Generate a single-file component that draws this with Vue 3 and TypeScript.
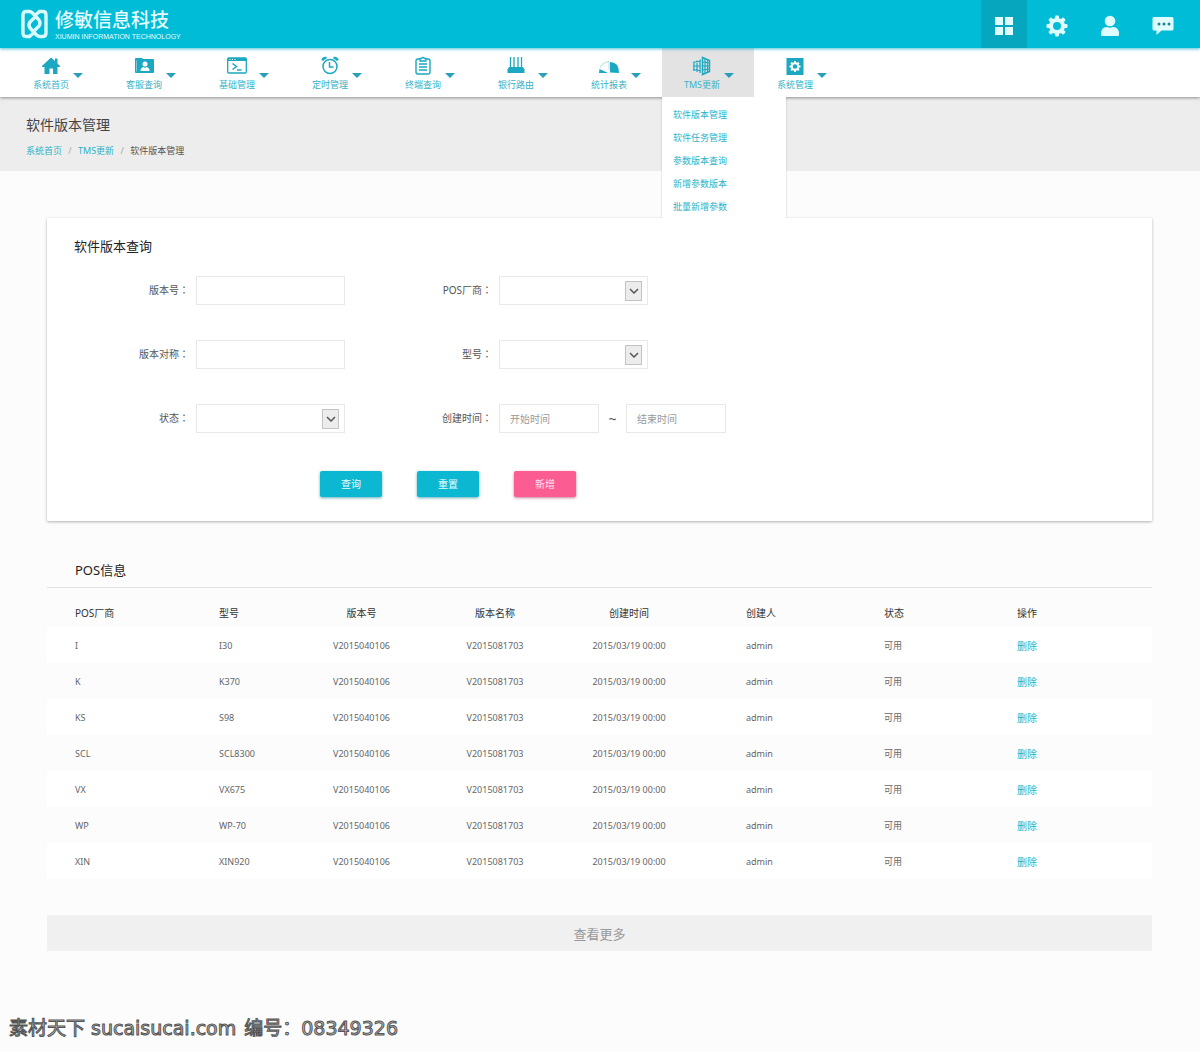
<script setup lang="ts">
import { ref } from 'vue'

interface NavItem {
  label: string
  icon: string
  children?: string[]
}

interface PosRow {
  vendor: string
  model: string
}

const navItems: NavItem[] = [
  { label: '系统首页', icon: 'home' },
  { label: '客服查询', icon: 'service' },
  { label: '基础管理', icon: 'terminal' },
  { label: '定时管理', icon: 'clock' },
  { label: '终端查询', icon: 'clipboard' },
  { label: '银行路由', icon: 'router' },
  { label: '统计报表', icon: 'chart' },
  {
    label: 'TMS更新',
    icon: 'building',
    children: ['软件版本管理', '软件任务管理', '参数版本查询', '新增参数版本', '批量新增参数'],
  },
  { label: '系统管理', icon: 'settings' },
]

const activeNav = ref('TMS更新')

const rows: PosRow[] = [
  { vendor: 'I', model: 'I30' },
  { vendor: 'K', model: 'K370' },
  { vendor: 'KS', model: 'S98' },
  { vendor: 'SCL', model: 'SCL8300' },
  { vendor: 'VX', model: 'VX675' },
  { vendor: 'WP', model: 'WP-70' },
  { vendor: 'XIN', model: 'XIN920' },
]

const teeth = [0, 45, 90, 135, 180, 225, 270, 315]
</script>

<template>
  <div class="page">
    <header class="topbar">
      <a class="brand" href="#">
        <svg class="brand-mark" viewBox="0 0 27 30" aria-hidden="true">
          <g fill="none" stroke="#d9fbff" stroke-width="3.4" stroke-linejoin="round" stroke-linecap="round">
            <path d="M8.500 27.500 H5 Q2 27.500 2 24 V6 Q2 2.500 5 2.500 H8 Q10 2.500 11.500 4 L18 11 Q20 14 18 17 L14 21" />
            <path d="M18.500 2.500 H22 Q25 2.500 25 6 V24 Q25 27.500 22 27.500 H19 Q17 27.500 15.500 26 L9 19 Q7 16 9 13 L13 9" />
            <path d="M8.500 27.500 L12 24.500 M18.500 2.500 L15 5.500" />
          </g>
        </svg>
        <span class="brand-text">
          <span class="brand-name">修敏信息科技</span>
          <span class="brand-sub">XIUMIN INFORMATION TECHNOLOGY</span>
        </span>
      </a>
      <div class="tools">
        <button class="tool current" type="button" aria-label="应用">
          <svg viewBox="0 0 22 22"><path d="M2 2h8v8H2zM12 2h8v8h-8zM2 12h8v8H2zM12 12h8v8h-8z" /></svg>
        </button>
        <button class="tool" type="button" aria-label="设置">
          <svg viewBox="0 0 22 22">
            <circle cx="11" cy="11" r="6" fill="none" stroke="currentColor" stroke-width="4" />
            <rect v-for="a in teeth" :key="a" x="9" y="0.500" width="4" height="4" rx="1" :transform="`rotate(${a} 11 11)`" />
          </svg>
        </button>
        <button class="tool" type="button" aria-label="用户">
          <svg viewBox="0 0 22 22">
            <circle cx="11" cy="6" r="5.300" />
            <path d="M2 20 Q1.500 12 8 12 Q11 13.500 14 12 Q20.500 12 20 20 Q20 21 19 21 H3 Q2 21 2 20z" />
          </svg>
        </button>
        <button class="tool" type="button" aria-label="消息">
          <svg viewBox="0 0 22 22">
            <path d="M2 2h18q1.500 0 1.500 1.500v10.500q0 1.500-1.500 1.500H9.500L4.500 20v-4.500H2Q.5 15.500.5 14V3.500Q.5 2 2 2z" />
            <g fill="#25809a"><circle cx="7" cy="9" r="1.500" /><circle cx="12" cy="9" r="1.500" /><circle cx="17" cy="9" r="1.500" /></g>
          </svg>
        </button>
      </div>
    </header>

    <nav class="nav">
      <div v-for="item in navItems" :key="item.label" class="nav-item" :class="{ active: item.label === activeNav }">
        <a class="nav-link" href="#" @click.prevent="activeNav = item.label">
          <span class="nav-main">
            <svg v-if="item.icon === 'home'" class="nav-icon" viewBox="0 0 20 20">
              <path fill="currentColor" d="M10 1.500 L14 5 V2.500 h2.500 V7.500 L19 10 V11 H16.500 V18 H12 V12.500 H8.500 V18 H3.500 V11 H1 V10z" />
            </svg>
            <svg v-else-if="item.icon === 'service'" class="nav-icon" viewBox="0 0 20 20">
              <path fill="currentColor" d="M2 2h6l1 1h10q1 0 1 1v12q0 1-1 1H2q-1 0-1-1V3q0-1 1-1z" />
              <path fill="#fff" d="M3 4.500h-.6v11h.6z" opacity=".7" />
              <circle cx="11" cy="8" r="2.500" fill="#fff" />
              <path fill="#fff" d="M6.500 15q0-3.500 3-4l1.500 1 1.500-1q3 .5 3 4z" />
            </svg>
            <svg v-else-if="item.icon === 'terminal'" class="nav-icon" viewBox="0 0 20 20" fill="none" stroke="currentColor">
              <rect x="0.700" y="2" width="18.600" height="15" rx="1" stroke-width="1.300" />
              <path d="M1 3.500h18" stroke-width="3" />
              <path d="M2.500 3.500h1M5 3.500h1M7.500 3.500h1" stroke="#fff" />
              <path d="M5.500 7.500 L9.500 10.500 L5.500 13.500" stroke-width="1.500" />
              <path d="M10 14h4.500" stroke-width="1.500" />
            </svg>
            <svg v-else-if="item.icon === 'clock'" class="nav-icon" viewBox="0 0 20 20" fill="none" stroke="currentColor">
              <circle cx="10" cy="10.500" r="7" stroke-width="1.500" />
              <path d="M9.500 6v5h4" stroke-width="1.500" />
              <path d="M2.500 4.500 Q3 1.500 6.500 2 M17.500 4.500 Q17 1.500 13.500 2" stroke-width="2.500" />
            </svg>
            <svg v-else-if="item.icon === 'clipboard'" class="nav-icon" viewBox="0 0 20 20" fill="none" stroke="currentColor">
              <rect x="3" y="3" width="14" height="15" rx="2" stroke-width="1.400" />
              <path d="M7 2.500 h1.500 Q10 .5 11.500 2.500 H13 V5 H7z" fill="#fff" stroke-width="1.300" />
              <path d="M6 8h8M6 11h8M6 14h8" stroke-width="1.300" />
            </svg>
            <svg v-else-if="item.icon === 'router'" class="nav-icon" viewBox="0 0 20 20">
              <path d="M4.500 1v11M8 1v11M12 1v11M15.500 1v11" stroke="currentColor" stroke-width="1.300" />
              <path fill="currentColor" d="M3 11h14l1.500 2.500v3.500h-17v-3.500z" />
            </svg>
            <svg v-else-if="item.icon === 'chart'" class="nav-icon" viewBox="0 0 20 20">
              <path fill="currentColor" d="M11 6 Q20 6 20 17 L11 16.500z" />
              <path d="M1 12 Q3 6.500 10 5.500 L10 14" fill="none" stroke="currentColor" stroke-width=".6" opacity=".6" />
              <path fill="currentColor" d="M.5 13 L9 17 H0z" />
            </svg>
            <svg v-else-if="item.icon === 'building'" class="nav-icon" viewBox="0 0 20 20" fill="none" stroke="currentColor">
              <path d="M10.500 1.500 L17.500 4.500 V15.500 L10.500 18.500z" stroke-width="1.500" />
              <path d="M13 2.500v15M15.500 3.500v13M10.500 6l7 1M10.500 10h7M10.500 14l7-1" stroke-width="1.200" />
              <path d="M2 5.500v9.500M5 4.500v11.500M8 3.500v13.500M1 6.500l8-1.500M1 10h8M1 13.500l8 1.500" stroke-width="1.200" />
            </svg>
            <svg v-else class="nav-icon" viewBox="0 0 20 20">
              <rect x="1.500" y="2" width="17" height="17" fill="currentColor" />
              <circle cx="10" cy="10.500" r="3.300" fill="none" stroke="#fff" stroke-width="2" />
              <rect v-for="a in teeth" :key="a" x="9" y="5" width="2" height="2" fill="#fff" :transform="`rotate(${a} 10 10.500)`" />
            </svg>
            <span class="nav-label">{{ item.label }}</span>
          </span>
          <span class="caret" />
        </a>
        <ul v-if="item.children && item.label === activeNav" class="submenu">
          <li v-for="child in item.children" :key="child"><a href="#">{{ child }}</a></li>
        </ul>
      </div>
    </nav>

    <section class="title-band">
      <h1>软件版本管理</h1>
      <div class="crumbs">
        <a href="#">系统首页</a><span class="slash">/</span><a href="#">TMS更新</a><span class="slash">/</span><span>软件版本管理</span>
      </div>
    </section>

    <main class="content">
      <form class="panel" @submit.prevent>
        <h2>软件版本查询</h2>
        <div class="fields">
          <label for="version">版本号<span class="colon">：</span></label>
          <input id="version" class="box" type="text" />
          <label for="vendor">POS厂商<span class="colon">：</span></label>
          <span class="select">
            <select id="vendor" class="box"><option value=""></option></select>
            <span class="select-btn"><svg viewBox="0 0 10 6"><path d="M1 1 L5 5 L9 1" /></svg></span>
          </span>
          <label for="alias">版本对称<span class="colon">：</span></label>
          <input id="alias" class="box" type="text" />
          <label for="model">型号<span class="colon">：</span></label>
          <span class="select">
            <select id="model" class="box"><option value=""></option></select>
            <span class="select-btn"><svg viewBox="0 0 10 6"><path d="M1 1 L5 5 L9 1" /></svg></span>
          </span>
          <label for="state">状态<span class="colon">：</span></label>
          <span class="select">
            <select id="state" class="box"><option value=""></option></select>
            <span class="select-btn"><svg viewBox="0 0 10 6"><path d="M1 1 L5 5 L9 1" /></svg></span>
          </span>
          <label for="from">创建时间<span class="colon">：</span></label>
          <span class="range">
            <input id="from" class="box" type="text" placeholder="开始时间" />
            <span class="tilde">~</span>
            <input class="box" type="text" placeholder="结束时间" aria-label="结束时间" />
          </span>
        </div>
        <div class="actions">
          <button type="submit">查询</button>
          <button type="reset">重置</button>
          <button type="button" class="add">新增</button>
        </div>
      </form>

      <section class="list">
        <h2>POS信息</h2>
        <table>
          <colgroup>
            <col class="c-vendor" /><col class="c-model" /><col class="c-version" /><col class="c-name" />
            <col class="c-time" /><col class="c-user" /><col class="c-state" /><col />
          </colgroup>
          <thead>
            <tr>
              <th>POS厂商</th>
              <th>型号</th>
              <th class="mid">版本号</th>
              <th class="mid">版本名称</th>
              <th class="mid">创建时间</th>
              <th>创建人</th>
              <th>状态</th>
              <th>操作</th>
            </tr>
          </thead>
          <tbody>
            <tr v-for="row in rows" :key="row.vendor">
              <td>{{ row.vendor }}</td>
              <td>{{ row.model }}</td>
              <td class="mid">V2015040106</td>
              <td class="mid">V2015081703</td>
              <td class="mid">2015/03/19 00:00</td>
              <td>admin</td>
              <td>可用</td>
              <td><a href="#">删除</a></td>
            </tr>
          </tbody>
        </table>
      </section>

      <button class="more" type="button">查看更多</button>
    </main>

    <footer class="credit">
      <span>素材天下</span><span>sucaisucai.com</span><span class="code">编号：08349326</span>
    </footer>
  </div>
</template>

<style>
body {
  margin: 0;
  background: #fcfcfc;
}
</style>

<style scoped>
.page {
  min-height: 100vh;
  background: #fcfcfc;
  color: #555;
  font-family: "Noto Sans", "Noto Sans CJK SC", sans-serif;
  font-size: 10px;
}

.page * {
  box-sizing: border-box;
}

a {
  color: #2bb3c8;
  text-decoration: none;
}

button,
input,
select {
  font: inherit;
}

h1,
h2 {
  margin: 0;
  font-weight: 400;
}

.topbar {
  position: relative;
  z-index: 3;
  display: flex;
  justify-content: space-between;
  height: 48px;
  padding: 0 14px 0 21px;
  background: #00bcd7;
  box-shadow: 0 1px 3px rgba(0, 170, 195, 0.7);
}

.brand {
  display: flex;
  align-items: center;
  gap: 7px;
  color: #e6fdff;
}

.brand-mark {
  width: 27px;
  height: 30px;
}

.brand-text {
  display: flex;
  flex-direction: column;
  gap: 1px;
  padding-top: 2px;
}

.brand-name {
  font-size: 19px;
  font-weight: 500;
  line-height: 22px;
}

.brand-sub {
  font-family: "Liberation Sans", Arial, sans-serif;
  font-size: 7px;
  line-height: 10px;
}

.tools {
  display: flex;
  gap: 7px;
}

.tool {
  display: flex;
  align-items: center;
  justify-content: center;
  width: 46px;
  padding: 3px 0 0;
  border: 0;
  background: none;
  color: #dffcff;
}

.tool.current {
  background: #06a6be;
}

.tool svg {
  width: 22px;
  height: 22px;
  fill: currentColor;
}

.nav {
  position: relative;
  z-index: 2;
  display: flex;
  gap: 1px;
  height: 49px;
  padding-left: 11px;
  background: #fff;
  box-shadow: 0 1px 3px rgba(0, 0, 0, 0.4);
}

.nav-item {
  position: relative;
  width: 92px;
}

.nav-item.active {
  background: #e3e3e3;
}

.nav-link {
  display: flex;
  align-items: center;
  gap: 3px;
  height: 100%;
  padding: 3px 0 0 21px;
  color: #1ba8c0;
}

.nav-main {
  display: flex;
  flex-direction: column;
  align-items: center;
  gap: 2px;
  width: 38px;
}

.nav-icon {
  width: 20px;
  height: 20px;
}

.nav-label {
  color: #35b3c8;
  font-size: 9px;
  line-height: 14px;
  white-space: nowrap;
}

.caret {
  margin-top: 2px;
  border: 5px solid transparent;
  border-top-color: #2b9fb9;
  border-bottom-width: 0;
}

.submenu {
  position: absolute;
  top: 100%;
  left: 0;
  width: 124px;
  height: 121px;
  margin: 0;
  padding: 6px 11px 0;
  background: #fff;
  box-shadow: 0 0 2px rgba(0, 0, 0, 0.2);
  clip-path: inset(0 -3px 0 -3px);
  list-style: none;
  font-size: 9px;
  line-height: 23px;
}

.title-band {
  padding: 17px 26px 11px;
  background: #ededed;
}

h1 {
  color: #444;
  font-size: 14px;
  line-height: 22px;
}

.crumbs {
  display: flex;
  margin-top: 6px;
  font-size: 9px;
  line-height: 18px;
}

.slash {
  width: 16px;
  color: #aaa;
  text-align: center;
}

.content {
  padding: 47px 48px 0 47px;
}

.panel {
  padding: 18px 0 24px;
  border-radius: 1px;
  background: #fff;
  box-shadow: 0 1px 3px rgba(0, 0, 0, 0.3);
}

h2 {
  padding-left: 27px;
  color: #222;
  font-size: 13px;
  line-height: 20px;
}

.fields {
  display: grid;
  grid-template-columns: 142px 149px 140px auto;
  align-items: center;
  gap: 35px 7px;
  margin-top: 20px;
}

.fields label {
  padding-bottom: 2px;
  line-height: 16px;
  text-align: right;
}

.colon {
  font-family: "Noto Sans CJK TC", sans-serif;
}

.box {
  width: 149px;
  height: 29px;
  padding: 0 10px;
  border: 1px solid #e8e8e8;
  border-radius: 0;
  outline: 0;
  background: #fff;
  color: #555;
  appearance: none;
}

.box::placeholder {
  color: #999;
  opacity: 1;
}

.select {
  position: relative;
  display: flex;
  width: 149px;
}

.select-btn {
  position: absolute;
  top: 5px;
  right: 6px;
  display: flex;
  align-items: center;
  justify-content: center;
  width: 17px;
  height: 20px;
  border: 1px solid #c4c4c4;
  background: #ececec;
  pointer-events: none;
}

.select-btn svg {
  width: 10px;
  height: 6px;
  fill: none;
  stroke: #555;
  stroke-width: 1.5;
}

.range {
  display: flex;
  align-items: center;
}

.range .box {
  width: 100px;
}

.tilde {
  width: 27px;
  font-size: 14px;
  line-height: 20px;
  text-align: center;
}

.actions {
  display: flex;
  gap: 35px;
  margin-top: 38px;
  padding-left: 273px;
}

.actions button {
  width: 62px;
  height: 26px;
  padding: 0 0 2px;
  border: 0;
  border-radius: 2px;
  background: #0cb8d1;
  box-shadow: 0 1px 3px rgba(0, 120, 140, 0.6);
  color: #e6fdff;
}

.actions .add {
  background: #fb5d92;
  box-shadow: 0 1px 3px rgba(170, 40, 90, 0.6);
  color: #ffe3ee;
}

.list {
  margin-top: 39px;
}

.list h2 {
  padding: 0 28px 7px;
  border-bottom: 1px solid #e2e2e2;
}

table {
  width: 100%;
  table-layout: fixed;
  border-collapse: collapse;
}

.c-vendor { width: 144px; }
.c-model { width: 82px; }
.c-version { width: 177px; }
.c-name { width: 90px; }
.c-time { width: 178px; }
.c-user { width: 138px; }
.c-state { width: 133px; }

th,
td {
  padding: 0 0 0 28px;
  text-align: left;
  white-space: nowrap;
}

th {
  height: 39px;
  padding-top: 9px;
  color: #333;
  font-weight: 400;
}

td {
  height: 36px;
  color: #666;
  font-size: 9px;
}

td a {
  font-size: 10px;
}

.mid {
  padding-left: 0;
  text-align: center;
}

tbody tr:nth-child(odd) {
  background: #fff;
}

.more {
  display: block;
  width: 100%;
  height: 36px;
  margin-top: 36px;
  border: 0;
  background: #f0f0f0;
  color: #999;
  font-size: 13px;
}

.credit {
  display: flex;
  gap: 6px;
  padding: 64px 9px 10px;
  color: #c4c4c4;
  font-family: "DejaVu Sans", "Noto Sans CJK SC", sans-serif;
  font-size: 19px;
  line-height: 26px;
  -webkit-text-stroke: 1px #555;
}

.code {
  margin-left: 2px;
}
</style>
